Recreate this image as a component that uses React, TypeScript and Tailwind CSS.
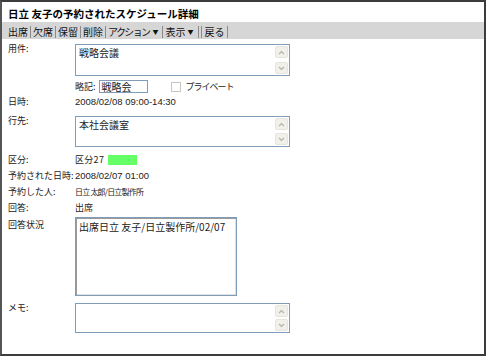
import React from "react";

const jp = "font-['Noto_Sans_CJK_JP','Liberation_Sans',sans-serif]";

function Chevron({ up }: { up?: boolean }) {
  return (
    <svg width="7" height="5" viewBox="0 0 7 5" fill="none">
      <path
        d={up ? "M1 4L3.5 1.5L6 4" : "M1 1L3.5 3.5L6 1"}
        stroke="#b4b3a6"
        strokeWidth="1.2"
      />
    </svg>
  );
}

function TextBox({ text, height }: { text?: string; height: string }) {
  return (
    <div className={`flex w-[215px] ${height} border border-[#7f9db9] bg-white`}>
      <div className="flex-1 px-[3px] pt-[1px] text-[10px] leading-[13px] text-[#222]">{text}</div>
      <div className="flex w-[14px] flex-col justify-between py-[1px] pr-[1px]">
        <div className="flex h-[12px] items-center justify-center rounded-[2px] border border-[#e6e5dc] bg-[#f1f0ea]">
          <Chevron up />
        </div>
        <div className="flex h-[12px] items-center justify-center rounded-[2px] border border-[#e6e5dc] bg-[#f1f0ea]">
          <Chevron />
        </div>
      </div>
    </div>
  );
}

function Row({ label, children }: { label: string; children: React.ReactNode }) {
  return (
    <div className="flex h-[16px] items-center">
      <div className="w-[67px] shrink-0 whitespace-nowrap">{label}</div>
      <div className="flex items-center">{children}</div>
    </div>
  );
}

function Sep({ cls = "mx-[2px]" }: { cls?: string }) {
  return <span className={`${cls} h-[12px] w-px bg-[#8a8a8a]`} />;
}

const tools = ["出席", "欠席", "保留", "削除"];

export default function App() {
  return (
    <div className={`h-[357px] w-[486px] bg-white ${jp} text-[9px] text-[#222]`}>
      <div className="flex h-[356px] w-[486px] flex-col border-2 border-[#3c3c3c] border-l-[#555]">
        {/* Title */}
        <div className="h-[20px] pl-[6px] pt-[4px] text-[10.5px] font-bold leading-[16px] text-black">
          日立 友子の予約されたスケジュール詳細
        </div>

        {/* Toolbar */}
        <div className="flex h-[17px] items-center bg-[#d6d6d6] pl-[6px] pt-[2px] text-[10px] leading-[12px] text-[#111]">
          {tools.map((t) => (
            <React.Fragment key={t}>
              <span>{t}</span>
              <Sep />
            </React.Fragment>
          ))}
          <span className="tracking-[-1.6px]">アクション</span>
          <span className="ml-[3px] text-[6px]">▼</span>
          <Sep cls="mx-[3px]" />
          <span>表示</span>
          <span className="ml-[2px] text-[6px]">▼</span>
          <Sep cls="ml-[4px]" />
          <Sep cls="ml-[2px] mr-[3px]" />
          <span>戻る</span>
          <Sep cls="ml-[2px]" />
        </div>

        {/* Body */}
        <div className="flex flex-col pl-[6px]">
          <div className="mt-[5px] flex">
            <div className="w-[67px] shrink-0 leading-[10px]">用件:</div>
            <TextBox text="戦略会議" height="h-[32px]" />
          </div>

          <div className="mt-[4px] flex h-[13px] items-center pl-[67px]">
            <span className="mr-[3px]">略記:</span>
            <div className="flex h-[13px] w-[49px] items-center border border-[#7f9db9] px-[2px] text-[10px]">
              戦略会
            </div>
            <span className="ml-[23px] h-[10px] w-[10px] border border-[#c8c8c0] bg-white" />
            <span className="ml-[5px] tracking-[-1px]">プライベート</span>
          </div>

          <div className="mt-[1px]">
            <Row label="日時:">
              <span className="font-['Liberation_Sans',sans-serif] text-[9.5px]">2008/02/08 09:00-14:30</span>
            </Row>
          </div>

          <div className="mt-[6px] flex">
            <div className="w-[67px] shrink-0 leading-[10px]">行先:</div>
            <TextBox text="本社会議室" height="h-[31px]" />
          </div>

          <div className="mt-[5px]">
            <Row label="区分:">
              <span className="tracking-[0.3px]">区分27</span>
              <span className="ml-[4px] h-[10px] w-[29px] bg-[#66ff66]" />
            </Row>
          </div>
          <Row label="予約された日時:">
            <span className="font-['Liberation_Sans',sans-serif] text-[9.5px]">2008/02/07 01:00</span>
          </Row>
          <Row label="予約した人:">
            <span className="text-[8px] tracking-[-0.8px]">日立 太郎/日立製作所</span>
          </Row>
          <Row label="回答:">
            <span>出席</span>
          </Row>

          <div className="mt-[1px] flex">
            <div className="w-[67px] shrink-0 leading-[16px]">回答状況</div>
            <div className="h-[79px] w-[162px] border border-[#7f9db9] bg-white px-[3px] pt-[2px] text-[10px] leading-[13px] shadow-[inset_1px_1px_0_#9a9a9a,inset_-1px_-1px_0_#e0e0e0]">
              出席日立 友子/日立製作所/02/07
            </div>
          </div>

          <div className="mt-[7px] flex">
            <div className="w-[67px] shrink-0 leading-[10px]">メモ:</div>
            <TextBox height="h-[30px]" />
          </div>
        </div>
      </div>
    </div>
  );
}
